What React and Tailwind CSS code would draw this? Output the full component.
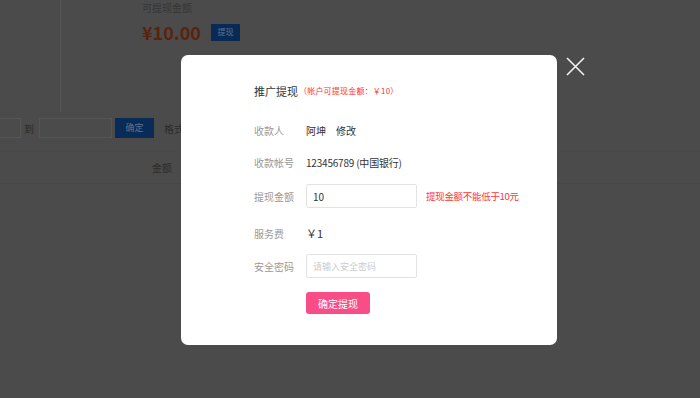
import React, { useState } from 'react'

const Row = ({ label, className = '', children }) => (
  <div className={`flex items-center h-6 ${className}`}>
    <div className="w-[52px] text-[10px] text-[#999]">{label}</div>
    <div className="flex items-center text-[10px] text-[#333]">{children}</div>
  </div>
)

const App = () => {
  const [amount, setAmount] = useState('10')
  const [password, setPassword] = useState('')

  return (
    <div
      className="relative w-[700px] h-[398px] overflow-hidden bg-[#4b4b4b]"
      style={{ fontFamily: '"Noto Sans CJK SC", "Noto Sans", sans-serif' }}
    >
      {/* dimmed page behind the dialog */}
      <div className="flex h-[112px]">
        <div className="w-[61px] border-r border-[#535353]" />
        <div className="pl-[81px] pt-[1px]">
          <div className="text-[10px] leading-[14px] text-[#363636]">可提现金额</div>
          <div className="mt-[7px] flex items-center gap-[10px]">
            <span className="text-[18px] leading-[20px] font-bold text-[#5c220e]">¥10.00</span>
            <span className="flex items-center justify-center w-[29px] h-[17px] bg-[#092a55] text-[8px] text-[#5f7290]">
              提现
            </span>
          </div>
        </div>
      </div>

      <div className="flex items-center h-[20px] mt-[6px] text-[10px] text-[#2c2c2c]">
        <div className="w-[21px] h-[20px] border border-l-0 border-[#555]" />
        <span className="ml-[3px]">到</span>
        <div className="ml-[5px] w-[73px] h-[20px] border border-[#555]" />
        <span className="ml-[3px] flex items-center justify-center w-[39px] h-[20px] bg-[#082b57] text-[9px] text-[#5f7592]">
          确定
        </span>
        <span className="ml-[10px]">格式</span>
      </div>

      <div className="mt-[13px] h-px bg-[#494949]" />
      <div className="flex items-center h-[32px] border-b border-[#474747]">
        <span className="ml-[152px] text-[10px] text-[#2c2c2c]">金额</span>
      </div>

      {/* dialog */}
      <div className="absolute left-[181px] top-[55px] w-[376px] h-[290px] rounded-[7px] bg-white pl-[73px] pt-[24px]">
        <div className="flex items-center h-6">
          <span className="text-[11px] text-[#333]">推广提现</span>
          <span className="ml-[1px] text-[8px] text-[#f33] tracking-[0.2px]">（帐户可提现金额：￥10）</span>
        </div>

        <Row label="收款人" className="mt-[15px]">
          <span>阿坤</span>
          <span className="ml-[10px]">修改</span>
        </Row>

        <Row label="收款帐号" className="mt-[8px]">
          <span className="tracking-[-0.2px]">123456789 (中国银行)</span>
        </Row>

        <Row label="提现金额" className="mt-[10px]">
          <input
            type="text"
            value={amount}
            onChange={(e) => setAmount(e.target.value)}
            className="w-[111px] h-6 px-[6px] border border-[#e3e3e3] rounded-[2px] text-[10px] text-[#333] outline-none"
          />
          <span className="ml-[9px] text-[9.5px] tracking-[-0.3px] text-[#f33]">提现金额不能低于10元</span>
        </Row>

        <Row label="服务费" className="mt-[13px]">
          <span className="text-[11px]">￥1</span>
        </Row>

        <Row label="安全密码" className="mt-[9px]">
          <input
            type="password"
            value={password}
            onChange={(e) => setPassword(e.target.value)}
            placeholder="请输入安全密码"
            className="w-[111px] h-6 px-[6px] border border-[#e3e3e3] rounded-[2px] text-[9px] text-[#333] placeholder:text-[#ccc] outline-none"
          />
        </Row>

        <button
          type="button"
          className="ml-[52px] mt-[14px] flex items-center justify-center w-[64px] h-[22px] rounded-[3px] bg-[#f84d86] text-[10px] text-white"
        >
          确定提现
        </button>
      </div>

      {/* close */}
      <svg
        className="absolute left-[566px] top-[57px]"
        width="19"
        height="19"
        viewBox="0 0 19 19"
        fill="none"
        stroke="#f2f2f2"
        strokeWidth="1.6"
      >
        <path d="M1 1L18 18M18 1L1 18" />
      </svg>
    </div>
  )
}

export default App
